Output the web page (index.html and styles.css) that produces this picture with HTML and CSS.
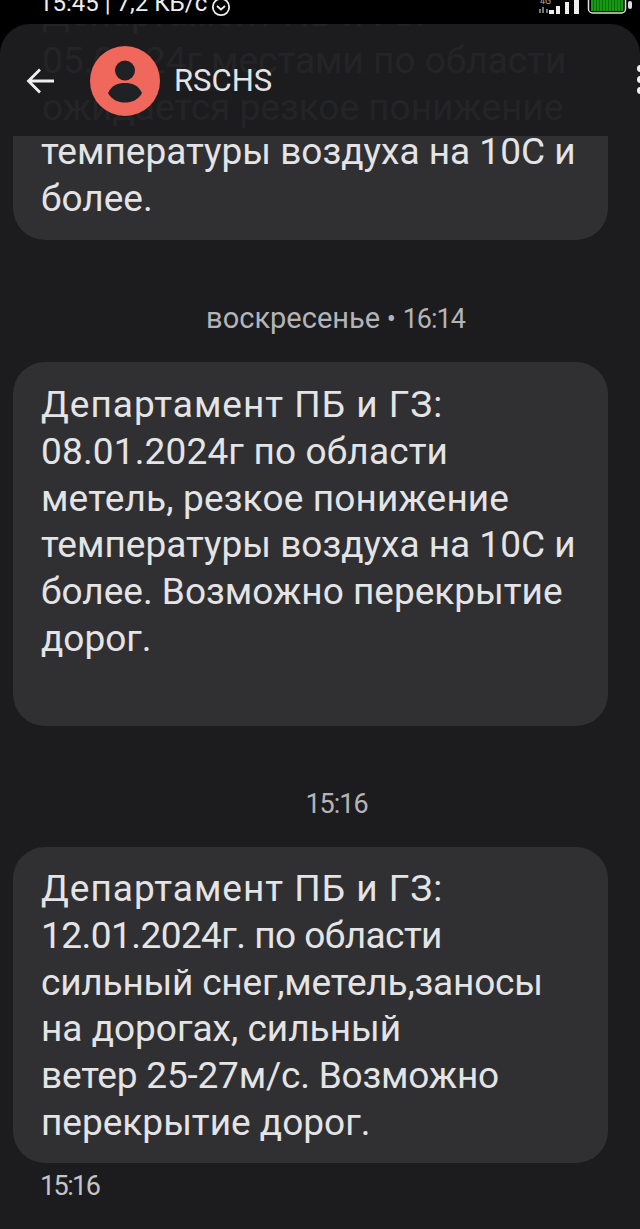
FILE: index.html
```html
<!DOCTYPE html>
<html lang="ru">
<head>
<meta charset="utf-8">
<title>RSCHS</title>
<link rel="stylesheet" href="styles.css">
</head>
<body>
<div class="status">
  <div class="status-left">
    <span class="status-time">15:45 | 7,2 КБ/с</span>
    <svg class="alarm" width="20" height="20" viewBox="0 0 20 20"><circle cx="10" cy="10" r="8.200" fill="none" stroke="#eee" stroke-width="1.800"/><path d="M6 9 10 12.500 14 9" fill="none" stroke="#eee" stroke-width="1.800"/></svg>
  </div>
  <div class="status-right">
    <svg width="44" height="24" viewBox="0 0 44 24"><text x="1" y="4" class="net">4G</text><g fill="#777"><rect x="0" y="9" width="2" height="4"/><rect x="3" y="7" width="2" height="6"/><rect x="7" y="9" width="2" height="4"/></g><g fill="#eee"><rect x="10" y="10" width="5" height="4"/><rect x="17" y="6" width="4" height="8"/><rect x="26" y="2" width="4" height="12"/><rect x="35" y="0" width="5" height="14"/></g></svg>
    <svg width="46" height="24" viewBox="0 0 46 24"><defs><pattern id="cells" width="3" height="4" patternUnits="userSpaceOnUse"><rect width="3" height="4" fill="#169a16"/><rect width="1" height="4" fill="#0c6f0c"/></pattern></defs><rect x="1.500" y="-6" width="37" height="19" rx="4" fill="none" stroke="#ddd" stroke-width="1.500"/><rect x="4" y="-4" width="32" height="15" fill="url(#cells)"/><rect x="41" y="1" width="4" height="8" rx="2" fill="#ddd"/></svg>
  </div>
</div>
<main class="screen">
  <header class="topbar">
    <div class="ghost">
      <p>Департамент ПБ и ГЗ:</p>
      <p>05.01.24г местами по области</p>
      <p>ожидается резкое понижение</p>
    </div>
    <svg class="back" width="32" height="32" viewBox="0 0 32 32"><path d="M29 16H4M15 4.500 3.500 16 15 27.500" fill="none" stroke="#eee" stroke-width="2.800"/></svg>
    <svg class="avatar" width="70" height="70" viewBox="0 0 70 70"><circle cx="35" cy="35" r="35" fill="#f0675c"/><circle cx="35" cy="24.500" r="10" fill="#202124"/><path d="M18 47C22 39 28 37 35 37s13 2 17 10c-4 7-10 9.500-17 9.500S22 54 18 47Z" fill="#202124"/></svg>
    <span class="name">RSCHS</span>
    <div class="more"><i></i><i></i><i></i></div>
  </header>
  <section class="bubble bubble-first">
    <p>температуры воздуха на 10С и<br>более.</p>
  </section>
  <div class="stamp stamp-day"><span class="stamp-word">воскресенье</span> • <span class="stamp-num">16:14</span></div>
  <section class="bubble bubble-second">
    <p><span class="wide">Департамент ПБ и ГЗ:</span><br><span class="loose">08.01.2024г по области</span><br><span class="loose">метель, резкое понижение</span><br>температуры воздуха на 10С и<br>более. Возможно перекрытие<br>дорог.</p>
  </section>
  <div class="stamp stamp-time"><span class="stamp-num">15:16</span></div>
  <section class="bubble bubble-third">
    <p><span class="wide">Департамент ПБ и ГЗ:</span><br><span class="tight">12.01.2024г. по области</span><br><span class="snug">сильный снег,метель,заносы</span><br>на дорогах, сильный<br><span class="snug">ветер 25-27м/с. Возможно</span><br>перекрытие дорог.</p>
  </section>
  <div class="sent"><span class="sent-num">15:16</span></div>
</main>
</body>
</html>
```
FILE: styles.css
```css
* { box-sizing: border-box; }
html, body { margin: 0; padding: 0; }
body {
  width: 640px;
  height: 1229px;
  overflow: hidden;
  background: #000;
  font-family: Roboto, "Noto Sans", sans-serif;
  color: #e4e4e6;
}
p { margin: 0; }
.status {
  height: 24px;
  display: flex;
  justify-content: space-between;
  overflow: hidden;
  padding: 0 7px 0 39px;
}
.status-left { display: flex; align-items: flex-end; gap: 4px; height: 16px; }
.status-time { font-size: 24px; line-height: 26px; color: #eee; white-space: nowrap; }
.alarm { flex: none; margin-bottom: -1px; }
.status-right { display: flex; gap: 4px; }
.net { font-family: Roboto, sans-serif; font-size: 9px; fill: #aaa; }
.screen {
  height: 1205px;
  background: #1c1c1e;
  border-radius: 30px 30px 0 0;
  overflow: hidden;
}
.topbar {
  position: relative;
  height: 112px;
  display: flex;
  align-items: center;
  overflow: hidden;
}
.ghost {
  position: absolute;
  left: 42px;
  top: -34px;
  font-size: 37px;
  line-height: 47px;
  color: #242426;
  white-space: nowrap;
}
.back { position: relative; margin-left: 25px; margin-top: 1px; flex: none; }
.avatar { position: relative; margin-left: 33px; flex: none; margin-top: 1px; }
.name { position: relative; margin-left: 14px; font-size: 31px; color: #e4e4e6; margin-top: 1px; }
.more {
  position: absolute;
  left: 637px;
  top: 41px;
  display: flex;
  flex-direction: column;
  gap: 4px;
}
.more i { display: block; width: 7px; height: 7px; border-radius: 50%; background: #eee; }
.bubble {
  margin: 0 32px 0 13px;
  background: #303032;
  border-radius: 32px;
  font-size: 37px;
  line-height: 46.800px;
  padding-left: 28px;
  white-space: nowrap;
  overflow: hidden;
}
.wide { letter-spacing: 1px; }
.loose { letter-spacing: 0.15px; }
.snug { letter-spacing: -0.2px; }
.tight { letter-spacing: -0.55px; }
.bubble-first { height: 104px; border-radius: 0 0 32px 32px; }
.bubble-first p { margin-top: -7px; }
.bubble-second { height: 364px; padding-top: 20px; }
.bubble-third { height: 316px; padding-top: 19px; }
.stamp { text-align: center; font-size: 27px; color: #b4b4b8; line-height: 30px; }
.stamp-word { font-size: 29px; }
.stamp-num { letter-spacing: -1px; }
.stamp-day { margin-top: 63px; margin-bottom: 28px; margin-left: 31px; }
.stamp-time { margin-top: 63px; margin-bottom: 28px; margin-left: 33px; }
.sent { margin: 8px 0 0 40px; font-size: 27px; line-height: 30px; color: #c4c4c8; }
.sent-num { letter-spacing: -1.6px; }
```
